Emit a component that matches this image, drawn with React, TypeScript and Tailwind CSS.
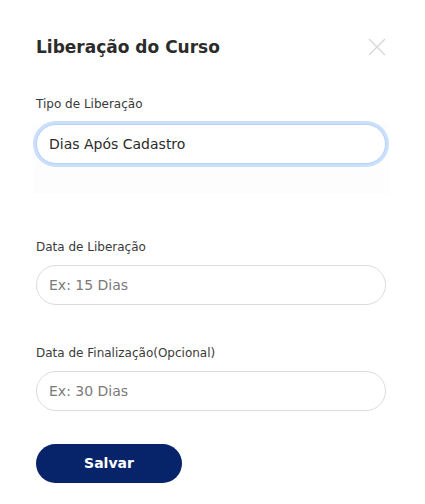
export default function App() {
    return (
        <div className="min-h-screen bg-white pl-9 pr-[39px] pt-9 pb-5 font-['DejaVu_Sans',sans-serif]">
            <div className="flex items-center justify-between">
                <h1 className="text-[17px] font-bold text-[#2b2b2b] leading-[22px]">Liberação do Curso</h1>
                <button className="text-[#d6d6d6]">
                    <svg width="18" height="18" viewBox="0 0 18 18" fill="none" stroke="currentColor" strokeWidth="1.3">
                        <path d="M1 1 17 17M17 1 1 17" />
                    </svg>
                </button>
            </div>

            <div className="mt-[38px]">
                <label className="block text-[12px] text-[#3a3a3a] leading-4">Tipo de Liberação</label>
                <div className="mt-3 bg-[#fdfdfd] pb-[30px] -mx-[3px] px-[3px]">
                    <div className="h-10 rounded-full border border-[#b6d2f7] ring-[3px] ring-[#cadffc] bg-white flex items-center px-3">
                        <span className="text-[14px] text-[#2b2b2b]">Dias Após Cadastro</span>
                    </div>
                </div>
            </div>

            <div className="mt-[45px]">
                <label className="block text-[12px] text-[#3a3a3a] leading-4">Data de Liberação</label>
                <input
                    className="mt-[10px] w-full h-10 rounded-full border border-[#dcdcdc] px-3 text-[14px] placeholder:text-[#7a7a7a] outline-none"
                    placeholder="Ex: 15 Dias"
                />
            </div>

            <div className="mt-10">
                <label className="block text-[12px] text-[#3a3a3a] leading-4">Data de Finalização(Opcional)</label>
                <input
                    className="mt-[10px] w-full h-10 rounded-full border border-[#dcdcdc] px-3 text-[14px] placeholder:text-[#7a7a7a] outline-none"
                    placeholder="Ex: 30 Dias"
                />
            </div>

            <button className="mt-[33px] w-[146px] h-[39px] rounded-full bg-[#07246a] text-white text-[14px] font-bold">
                Salvar
            </button>
        </div>
    );
}
